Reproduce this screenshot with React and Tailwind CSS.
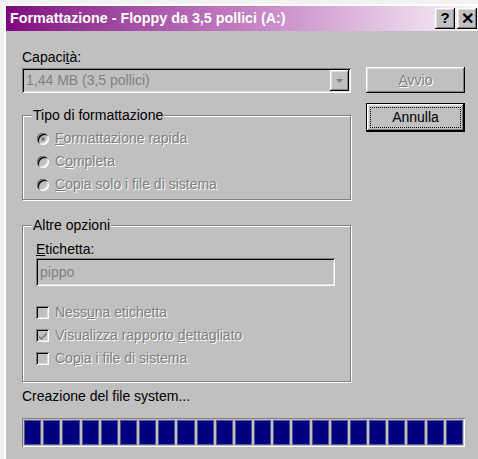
import React from "react";

const raised =
  "shadow-[inset_-1px_-1px_0_#000,inset_1px_1px_0_#fff,inset_-2px_-2px_0_#808080,inset_2px_2px_0_#dfdfdf]";
const sunken =
  "shadow-[inset_1px_1px_0_#808080,inset_-1px_-1px_0_#fff,inset_2px_2px_0_#000,inset_-2px_-2px_0_#dfdfdf]";

// greyed-out label with the white emboss of a disabled control
function Dim({ children }) {
  return <span className="text-[#808080] [text-shadow:1px_1px_0_#fff]">{children}</span>;
}

function Radio({ on, children }) {
  return (
    <div className="h-[23px] flex items-center">
      <span className={`ml-[14px] w-[12px] h-[12px] rounded-full bg-[#c0c0c0] flex items-center justify-center ${sunken}`}>
        {on && <span className="w-[4px] h-[4px] rounded-full bg-[#808080]" />}
      </span>
      <span className="ml-[6px]">
        <Dim>{children}</Dim>
      </span>
    </div>
  );
}

function Check({ on, children }) {
  return (
    <div className="h-[23px] flex items-center">
      <span className={`ml-[13px] w-[13px] h-[13px] bg-[#c0c0c0] flex items-center justify-center ${sunken}`}>
        {on && (
          <svg width="8" height="8" viewBox="0 0 7 7">
            <path d="M0 3l2 2 5-5v2L2 7 0 5z" fill="#808080" />
          </svg>
        )}
      </span>
      <span className="ml-[6px]">
        <Dim>{children}</Dim>
      </span>
    </div>
  );
}

// etched group box; the caption row is pulled up onto the top edge
function Group({ title, className, children }) {
  return (
    <div className={`border border-[#808080] shadow-[1px_1px_0_#fff,inset_1px_1px_0_#fff] ${className}`}>
      <div className="flex -mt-[9px] h-[16px]">
        <span className="w-[9px] shrink-0" />
        <span className="px-[1px] bg-[#c0c0c0] leading-[16px]">{title}</span>
      </div>
      {children}
    </div>
  );
}

export default function App() {
  return (
    <div className="w-[478px] h-[459px] overflow-hidden bg-[#f2f2f2] pl-[4px] pt-[4px] font-['Liberation_Sans',Arial,sans-serif] text-[14px] text-black">
      <div className="h-full border-l-2 border-t-2 border-white bg-[#c0c0c0]">
        {/* caption */}
        <div className="h-[25px] flex items-center bg-linear-to-r from-[#800080] via-[#c27ec2] to-[#f8f4f8] pl-[4px] pr-[1px]">
          <span className="font-bold text-white text-[14.3px]">Formattazione - Floppy da 3,5 pollici (A:)</span>
          <div className="ml-auto flex gap-[2px]">
            <span className={`w-[20px] h-[21px] bg-[#c0c0c0] flex items-center justify-center font-bold text-[15px] ${raised}`}>?</span>
            <span className={`w-[20px] h-[21px] bg-[#c0c0c0] flex items-center justify-center font-bold text-[16px] ${raised}`}>✕</span>
          </div>
        </div>

        <div className="pl-[16px]">
          <div className="flex items-start">
            <div className="w-[329px] pt-[18px]">
              <div className="leading-[16px] mb-[3px]">
                Capaci<u>t</u>à:
              </div>
              <div className={`h-[25px] flex items-center bg-[#c0c0c0] pl-[4px] ${sunken}`}>
                <span className="text-[#808080]">1,44 MB (3,5 pollici)</span>
                <span className={`ml-auto mr-[2px] w-[19px] h-[21px] flex items-center justify-center bg-[#c0c0c0] ${raised}`}>
                  <svg width="7" height="4" viewBox="0 0 7 4">
                    <path d="M0 0h7L3.5 4z" fill="#808080" />
                  </svg>
                </span>
              </div>

              <Group title="Tipo di formattazione" className="mt-[22px] pb-[3px]">
                <div className="pt-[4px]">
                  <Radio on>
                    <u>F</u>ormattazione rapida
                  </Radio>
                  <Radio>
                    C<u>o</u>mpleta
                  </Radio>
                  <Radio>
                    <u>C</u>opia solo i file di sistema
                  </Radio>
                </div>
              </Group>

              <Group title="Altre opzioni" className="mt-[25px] pb-[11px]">
                <div className="pl-[13px] pr-[15px] pt-[8px]">
                  <div className="leading-[16px] mb-[1px]">
                    <u>E</u>tichetta:
                  </div>
                  <div className={`h-[28px] flex items-center pl-[4px] bg-[#c0c0c0] ${sunken}`}>
                    <span className="text-[#808080]">pippo</span>
                  </div>
                </div>
                <div className="mt-[15px]">
                  <Check>
                    Ness<u>u</u>na etichetta
                  </Check>
                  <Check on>
                    Visualizza rapporto <u>d</u>ettagliato
                  </Check>
                  <Check>
                    Co<u>p</u>ia i file di sistema
                  </Check>
                </div>
              </Group>
            </div>

            <div className="ml-[15px] mt-[36px] w-[99px] flex flex-col gap-[10px]">
              <button className={`h-[26px] bg-[#c0c0c0] ${raised}`}>
                <Dim>
                  <u>A</u>vvio
                </Dim>
              </button>
              <button className="h-[29px] border border-black bg-[#c0c0c0]">
                <div className={`h-full p-[3px] ${raised}`}>
                  <div className="h-full border border-dotted border-black flex items-center justify-center">Annulla</div>
                </div>
              </button>
            </div>
          </div>

          <div className="mt-[6px] leading-[16px]">Creazione del file system...</div>

          <div className="mt-[14px] w-[443px] h-[29px] p-[2px] flex gap-[2px] shadow-[inset_1px_1px_0_#808080,inset_-1px_-1px_0_#fff]">
            {Array.from({ length: 23 }, (_, i) => (
              <div key={i} className="flex-1 bg-[#000080] border border-[#55558f]" />
            ))}
          </div>
        </div>
      </div>
    </div>
  );
}
